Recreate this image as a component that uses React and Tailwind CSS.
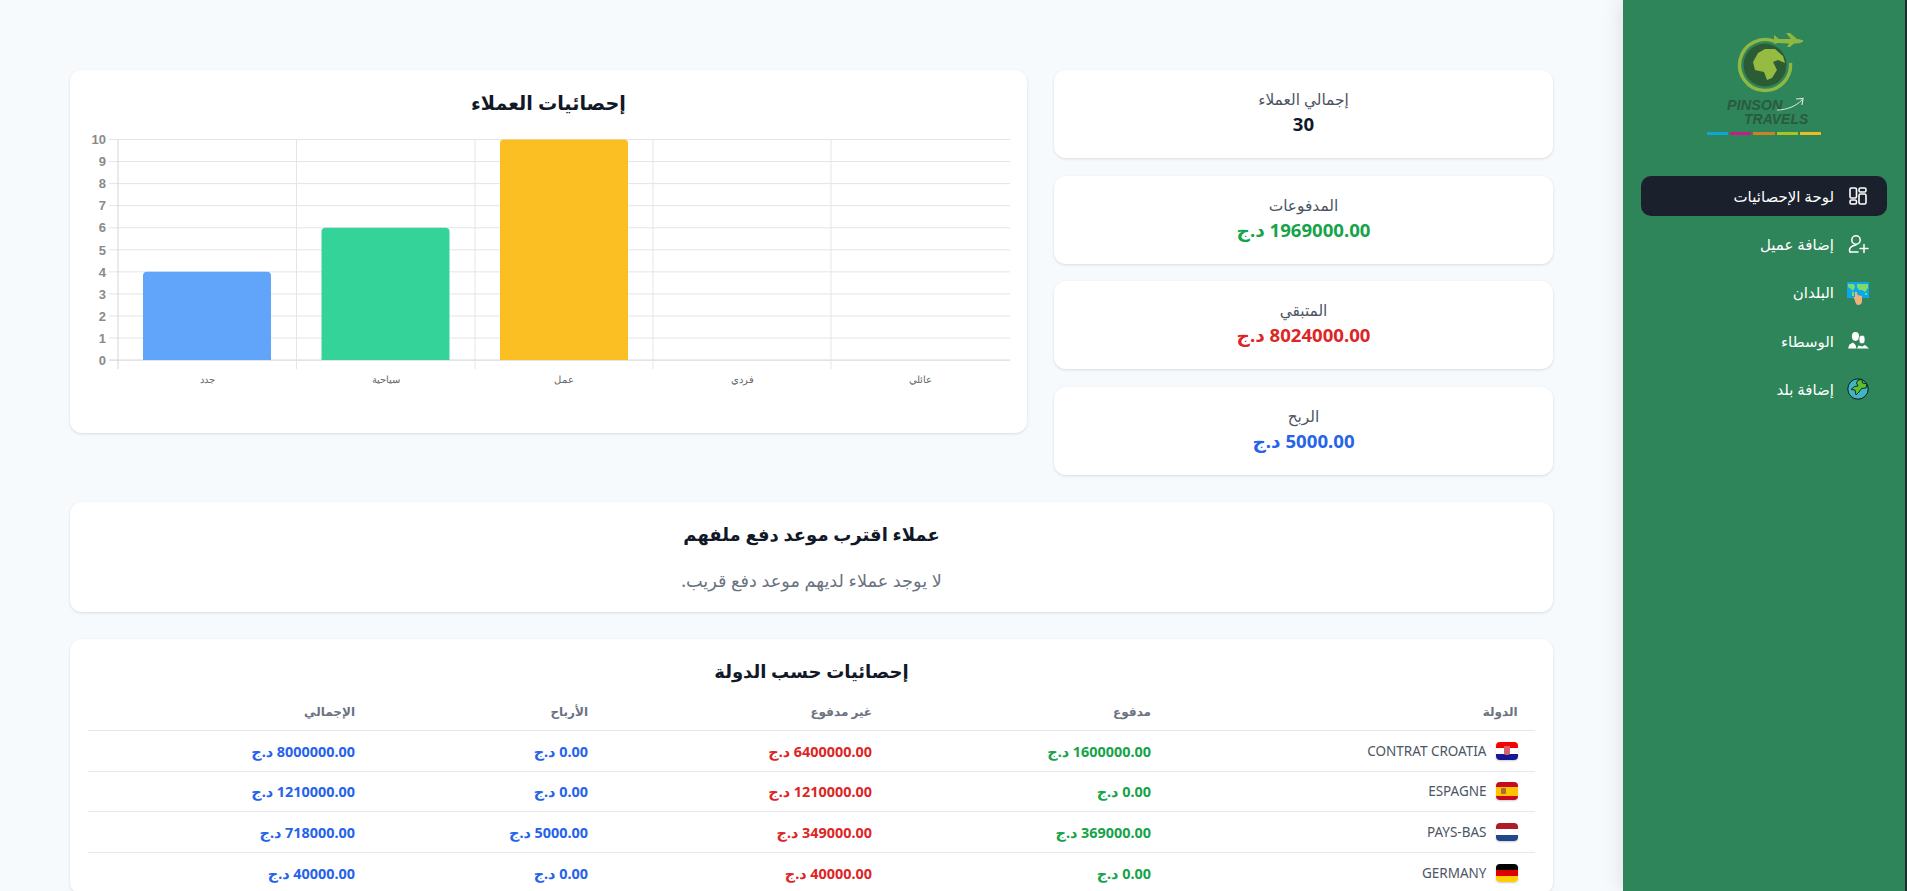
import React from "react";

function Logo() {
  return (
    <div className="flex flex-col items-center" dir="ltr">
      <svg width="120" height="99" viewBox="0 0 120 99" className="block">
        <path d="M71 8.5 A25.5 25.5 0 1 0 86.5 30" fill="none" stroke="#8fb843" strokeWidth="3.4" />
        <circle cx="61" cy="32" r="21.5" fill="#2b5c34" />
        <path d="M49 29 L54 20 L61 16 L71 16 L79 23 L81 30 L74 27 L69 29 L73 37 L68 45 L63 47 L60 39 L51 37 Z" fill="#95bb42" />
        <path d="M70 2 L75 6 L87 6 L82 0 L86 0 L93 6 C96 6 99 7 99.5 8 C97 10.5 93 10.5 90 10.5 L86 14 L83 14 L85 10.5 L74 10 L70 11 Z" fill="#8fb843" />
        <text x="23" y="77" fontFamily="'Liberation Sans', sans-serif" fontStyle="italic" fontWeight="700" fontSize="14.5" fill="#2a5a3f">PINSON</text>
        <text x="40" y="91" fontFamily="'Liberation Sans', sans-serif" fontStyle="italic" fontWeight="700" fontSize="14" fill="#2a5a3f">TRAVELS</text>
        <path d="M73 77 C83 77 92 73 98 67" fill="none" stroke="#dbe4dd" strokeWidth="1" />
        <path d="M92 66 L99 65.5 L98 72" fill="none" stroke="#dbe4dd" strokeWidth="1.2" />
      </svg>
      <div className="flex gap-[2px]">
        <div className="w-[21.3px] h-[3px] bg-[#0ea5d8]" />
        <div className="w-[21.3px] h-[3px] bg-[#c41e86]" />
        <div className="w-[21.3px] h-[3px] bg-[#cf7f27]" />
        <div className="w-[21.3px] h-[3px] bg-[#a8c41f]" />
        <div className="w-[21.3px] h-[3px] bg-[#f0bb20]" />
      </div>
    </div>
  );
}

function DashIcon() {
  return (
    <svg width="20" height="20" viewBox="0 0 20 20" fill="none" stroke="#fff" strokeWidth="1.6">
      <rect x="2" y="2" width="6.5" height="10" rx="1.4" />
      <rect x="2" y="14" width="6.5" height="4" rx="1.4" />
      <rect x="11" y="2" width="7" height="4" rx="1.4" />
      <rect x="11" y="8" width="7" height="10" rx="1.4" />
    </svg>
  );
}
function UserAddIcon() {
  return (
    <svg width="22" height="20" viewBox="0 0 22 20" fill="none" stroke="#fff" strokeWidth="1.5" strokeLinecap="round">
      <circle cx="9" cy="6" r="4.2" />
      <path d="M3 18 C1 14 5 11.5 9 11" />
      <path d="M3 18 H11" />
      <path d="M13 14.5 H21 M17 10.5 V18.5" />
    </svg>
  );
}
function MapIcon() {
  return (
    <svg width="22" height="23" viewBox="0 0 22 23" className="mt-[2px]">
      <rect x="0" y="0" width="22" height="16" fill="#0ea5e9" />
      <path d="M1 2 H7 L8 5 L6 9 L4 7 L1 5 Z M10 2 H21 V6 L18 10 L15 8 L12 8 L10 5 Z M5 10 H7 V14 H5 Z M18 11 H20 V13 H18 Z" fill="#7ddb6d" />
      <path d="M8 10 L10 10 L10.5 13 L15 14 V19 C15 22 13 23 11 23 C9.5 23 8.5 21 8 19 L6.5 15 L8 15 Z" fill="#eeb27c" />
    </svg>
  );
}
function GroupIcon() {
  return (
    <svg width="21" height="17" viewBox="0 0 21 17" fill="#fff">
      <ellipse cx="7.5" cy="4.5" rx="3.6" ry="4.4" />
      <ellipse cx="14" cy="7.5" rx="3" ry="4.2" stroke="#30855a" strokeWidth="0.7" />
      <path d="M0 16.5 L1.5 12.5 L5 10.5 L7.5 13 L8.5 16.5 Z" />
      <path d="M9 16.5 L10.5 13.5 L14 14.5 L17 13 L21 16.5 Z" />
    </svg>
  );
}
function EarthIcon() {
  return (
    <svg width="22" height="22" viewBox="0 0 22 22">
      <circle cx="11" cy="11" r="10.2" fill="#41b5c6" stroke="#0f1d1a" strokeWidth="1" />
      <path d="M11 2 L15 1.5 L15.5 5 L20 6 L19 10 L14.5 10.5 L12 14 L9 17 L8 12 L4 11.5 L7.5 8.5 L11 8 L9.5 5 Z" fill="#5cc02e" stroke="#0f1d1a" strokeWidth="0.9" />
    </svg>
  );
}

const navItems = [
  { label: "لوحة الإحصائيات", Icon: DashIcon, active: true },
  { label: "إضافة عميل", Icon: UserAddIcon },
  { label: "البلدان", Icon: MapIcon },
  { label: "الوسطاء", Icon: GroupIcon },
  { label: "إضافة بلد", Icon: EarthIcon },
];

function Sidebar() {
  return (
    <aside className="w-[284px] shrink-0 h-full bg-[#2f855a] border-r-[2px] border-r-[#1f2a2e] shadow-[0_0_20px_rgba(0,0,0,0.12)] z-10 flex flex-col">
      <div className="pt-[33px] h-[176px]">
        <Logo />
      </div>
      <nav className="flex flex-col gap-[8.25px] px-[18px]">
        {navItems.map(({ label, Icon, active }) => (
          <div
            key={label}
            className={`h-[40px] rounded-[10px] flex items-center gap-[13px] pr-[18px] text-[15px] text-white ${active ? "bg-[#1a202c]" : ""}`}
          >
            <span className="w-[22px] h-[22px] flex items-center justify-center shrink-0">
              <Icon />
            </span>
            <span>{label}</span>
          </div>
        ))}
      </nav>
    </aside>
  );
}

function StatCard({ label, value, color }) {
  return (
    <div className="h-[88px] bg-white rounded-[12px] shadow-[0_1px_3px_rgba(0,0,0,0.12)] flex flex-col items-center justify-center">
      <div className="text-[15.4px] leading-[20px] text-[#4b5563]">{label}</div>
      <div className={`text-[18.6px] leading-[28px] font-bold ${color}`}>{value}</div>
    </div>
  );
}

function Chart() {
  const ys = [10, 9, 8, 7, 6, 5, 4, 3, 2, 1, 0];
  const top = 70.5;
  const step = 22.06;
  const left = 48;
  const right = 940;
  const xs = [48, 226.5, 405, 583, 761];
  const labels = ["جدد", "سياحية", "عمل", "فردي", "عائلي"];
  const centers = [137, 315.5, 494, 672, 850];
  const bars = [
    { x: 73, v: 4, c: "#60a5fa" },
    { x: 251.5, v: 6, c: "#34d399" },
    { x: 430, v: 10, c: "#fbbf24" },
  ];
  return (
    <svg width="957" height="290" viewBox="0 70 957 290" className="block overflow-visible [direction:ltr]">
      {ys.map((v, i) => {
        const y = top + i * step;
        return (
          <g key={v}>
            <line x1={left - 9} x2={right} y1={y} y2={y} stroke={v === 0 ? "#cfd1d4" : "#e5e5e5"} strokeWidth="1" />
            <text x={36} y={y + 4.7} textAnchor="end" fontFamily="'Liberation Sans', sans-serif" fontSize="13" fontWeight="700" fill="#8a8a8a">{v}</text>
          </g>
        );
      })}
      {xs.map((x, i) => (
        <line key={x} x1={x} x2={x} y1={top} y2={top + 10 * step + 9} stroke={i === 0 ? "#d4d4d4" : "#e5e5e5"} strokeWidth="1" />
      ))}
      {bars.map((b) => {
        const h = b.v * step;
        const y = top + 10 * step - h;
        return (
          <path key={b.x} d={`M${b.x} ${y + h} V${y + 4} Q${b.x} ${y} ${b.x + 4} ${y} H${b.x + 124} Q${b.x + 128} ${y} ${b.x + 128} ${y + 4} V${y + h} Z`} fill={b.c} />
        );
      })}
      {labels.map((l, i) => (
        <text key={l} x={centers[i]} y={top + 10 * step + 23} textAnchor="middle" fontFamily="'Liberation Sans', sans-serif" fontSize="10" fill="#666">{l}</text>
      ))}
    </svg>
  );
}

function FlagHR() {
  return (
    <div className="w-[22px] h-[18px] rounded-[4px] overflow-hidden shadow-[0_1px_2px_rgba(0,0,0,0.2)] flex flex-col relative shrink-0">
      <div className="flex-1 bg-[#f70000]" /><div className="flex-1 bg-white" /><div className="flex-1 bg-[#171796]" />
      <div className="absolute left-[8px] top-[4px] w-[6px] h-[9px] bg-[#d95f6a] rounded-b-[2px]" />
    </div>
  );
}
function FlagES() {
  return (
    <div className="w-[22px] h-[18px] rounded-[4px] overflow-hidden shadow-[0_1px_2px_rgba(0,0,0,0.2)] flex flex-col relative shrink-0">
      <div className="h-[4.5px] bg-[#c60b1e]" /><div className="flex-1 bg-[#ffc400]" /><div className="h-[4.5px] bg-[#c60b1e]" />
      <div className="absolute left-[5px] top-[6px] w-[5px] h-[6px] bg-[#ad6b2a] rounded-[1px]" />
    </div>
  );
}
function FlagNL() {
  return (
    <div className="w-[22px] h-[18px] rounded-[4px] overflow-hidden shadow-[0_1px_2px_rgba(0,0,0,0.2)] flex flex-col shrink-0">
      <div className="flex-1 bg-[#ae1c28]" /><div className="flex-1 bg-white" /><div className="flex-1 bg-[#21468b]" />
    </div>
  );
}
function FlagDE() {
  return (
    <div className="w-[22px] h-[18px] rounded-[4px] overflow-hidden shadow-[0_1px_2px_rgba(0,0,0,0.2)] flex flex-col shrink-0">
      <div className="flex-1 bg-black" /><div className="flex-1 bg-[#dd0000]" /><div className="flex-1 bg-[#ffce00]" />
    </div>
  );
}

const rows = [
  { Flag: FlagHR, name: "CONTRAT CROATIA", paid: "1600000.00", unpaid: "6400000.00", profit: "0.00", total: "8000000.00" },
  { Flag: FlagES, name: "ESPAGNE", paid: "0.00", unpaid: "1210000.00", profit: "0.00", total: "1210000.00" },
  { Flag: FlagNL, name: "PAYS-BAS", paid: "369000.00", unpaid: "349000.00", profit: "5000.00", total: "718000.00" },
  { Flag: FlagDE, name: "GERMANY", paid: "0.00", unpaid: "40000.00", profit: "0.00", total: "40000.00" },
];

function Money({ v, color }) {
  return <span className={`font-bold text-[14.4px] ${color}`}>{v} د.ج</span>;
}

function CountryTable() {
  return (
    <table className="w-full table-fixed border-collapse text-right">
      <thead>
        <tr className="border-b border-[#e5e7eb] h-[41px]">
          <th className="w-[368px] pr-[17.5px] pl-[16px] pt-[5px] text-[12px] font-bold text-[#6b7280]">الدولة</th>
          <th className="w-[279px] px-[16px] pt-[5px] text-[12px] font-bold text-[#6b7280]">مدفوع</th>
          <th className="w-[284px] px-[16px] pt-[5px] text-[12px] font-bold text-[#6b7280]">غير مدفوع</th>
          <th className="w-[233px] px-[16px] pt-[5px] text-[12px] font-bold text-[#6b7280]">الأرباح</th>
          <th className="px-[16px] pt-[5px] text-[12px] font-bold text-[#6b7280]">الإجمالي</th>
        </tr>
      </thead>
      <tbody>
        {rows.map(({ Flag, name, paid, unpaid, profit, total }) => (
          <tr key={name} className="border-b border-[#e5e7eb] h-[40.67px]">
            <td className="pr-[17.5px] pl-[16px]">
              <div className="flex items-center gap-[9px] text-[13.5px] text-[#4b5563]">
                <Flag />
                <span>{name}</span>
              </div>
            </td>
            <td className="px-[16px]"><Money v={paid} color="text-[#16a34a]" /></td>
            <td className="px-[16px]"><Money v={unpaid} color="text-[#dc2626]" /></td>
            <td className="px-[16px]"><Money v={profit} color="text-[#2563eb]" /></td>
            <td className="px-[16px]"><Money v={total} color="text-[#2563eb]" /></td>
          </tr>
        ))}
      </tbody>
    </table>
  );
}

export default function App() {
  return (
    <div dir="rtl" className="h-screen w-full overflow-hidden flex bg-[#f7fafc] font-['Noto_Sans','DejaVu_Sans',sans-serif]">
      <Sidebar />
      <main className="flex-1 min-w-0 pt-[70px] px-[70px] flex flex-col gap-[27px]">
        <div className="flex gap-[27px] items-start shrink-0">
          <div className="w-[499px] shrink-0 flex flex-col gap-[17.67px]">
            <StatCard label="إجمالي العملاء" value="30" color="text-[#111827]" />
            <StatCard label="المدفوعات" value="1969000.00 د.ج" color="text-[#16a34a]" />
            <StatCard label="المتبقي" value="8024000.00 د.ج" color="text-[#dc2626]" />
            <StatCard label="الربح" value="5000.00 د.ج" color="text-[#2563eb]" />
          </div>
          <div className="flex-1 h-[363px] bg-white rounded-[12px] shadow-[0_1px_3px_rgba(0,0,0,0.12)] flex flex-col">
            <h2 className="text-center text-[19.2px] leading-[28px] font-bold text-[#111827] mt-[19px] mb-[22px]">إحصائيات العملاء</h2>
            <Chart />
          </div>
        </div>
        <div className="shrink-0 bg-white h-[110px] rounded-[12px] shadow-[0_1px_3px_rgba(0,0,0,0.12)] flex flex-col items-center pt-[18px]">
          <h2 className="text-[18px] leading-[28px] font-bold text-[#111827] mb-[20px]">عملاء اقترب موعد دفع ملفهم</h2>
          <p className="text-[17.7px] leading-[24px] text-[#6b7280]">لا يوجد عملاء لديهم موعد دفع قريب.</p>
        </div>
        <div className="shrink-0 bg-white rounded-[12px] shadow-[0_1px_3px_rgba(0,0,0,0.12)] px-[18px] pt-[18px]">
          <h2 className="text-center text-[18px] leading-[28px] font-bold text-[#111827] mb-[4.5px]">إحصائيات حسب الدولة</h2>
          <CountryTable />
        </div>
      </main>
    </div>
  );
}
